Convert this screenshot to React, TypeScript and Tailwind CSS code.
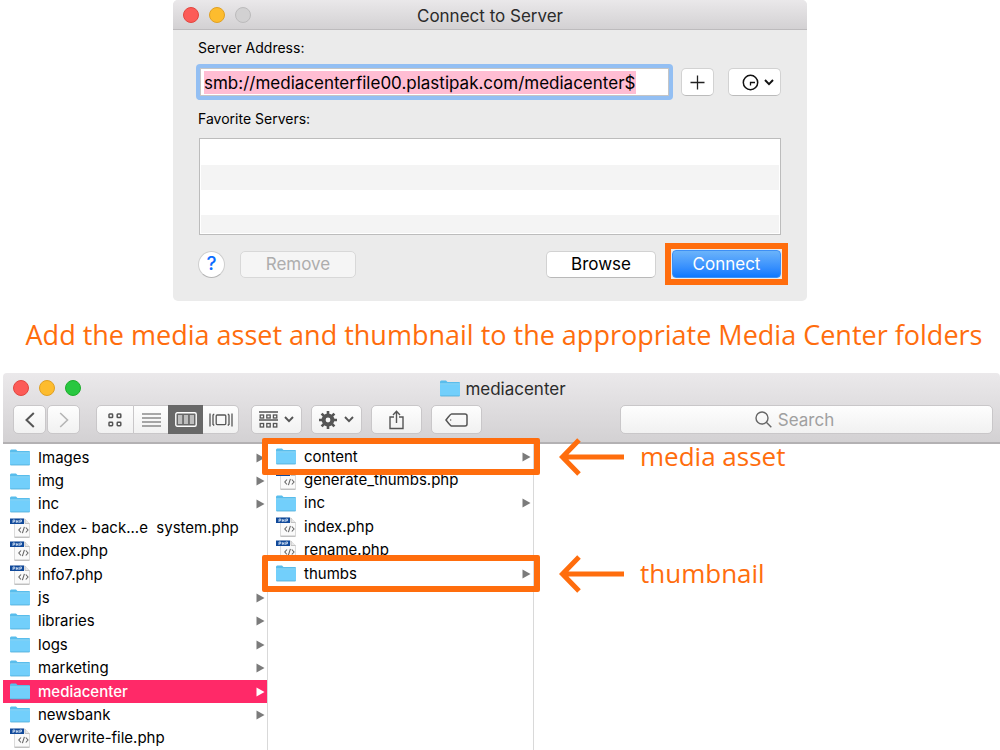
import type { ReactNode } from "react";

type Entry = { name: string; kind: "folder" | "php"; selected?: boolean; marked?: boolean };

const parentItems: Entry[] = [
  { name: "Images", kind: "folder" },
  { name: "img", kind: "folder" },
  { name: "inc", kind: "folder" },
  { name: "index - back...e  system.php", kind: "php" },
  { name: "index.php", kind: "php" },
  { name: "info7.php", kind: "php" },
  { name: "js", kind: "folder" },
  { name: "libraries", kind: "folder" },
  { name: "logs", kind: "folder" },
  { name: "marketing", kind: "folder" },
  { name: "mediacenter", kind: "folder", selected: true },
  { name: "newsbank", kind: "folder" },
  { name: "overwrite-file.php", kind: "php" },
];

const childItems: Entry[] = [
  { name: "content", kind: "folder", marked: true },
  { name: "generate_thumbs.php", kind: "php" },
  { name: "inc", kind: "folder" },
  { name: "index.php", kind: "php" },
  { name: "rename.php", kind: "php" },
  { name: "thumbs", kind: "folder", marked: true },
];

const columnGrid = "grid h-[304px] grid-rows-[repeat(13,minmax(0,1fr))]";

function FolderIcon() {
  return (
    <svg width="20" height="17" viewBox="0 0 20 17" className="shrink-0" aria-hidden="true">
      <path d="M0 2 Q0 .5 1.2 .5 H6 L7.5 2 H19 Q20 2 20 3 V15 Q20 16 19 16 H1 Q0 16 0 15Z" fill="#59bdec" />
      <path d="M0 4.2 H20 V15 Q20 16 19 16 H1 Q0 16 0 15Z" fill="#72cffb" />
      <path d="M0 3.9 H20" stroke="#9fdffb" strokeWidth=".8" />
      <path d="M.5 16 H19.5" stroke="#4ba9d6" strokeWidth=".8" />
    </svg>
  );
}

function PhpIcon() {
  return (
    <svg width="20" height="20" viewBox="0 0 20 20" className="shrink-0" aria-hidden="true">
      <path d="M4.5 1 H15 L19.5 5.5 V19 H4.5Z" fill="#fafafa" stroke="#d2d2d2" strokeWidth=".8" />
      <path d="M15 1 V5.5 H19.5" fill="#e9e9e9" stroke="#b5b5b5" strokeWidth=".8" />
      <path d="M4.5 19.3 H19.5" stroke="#b4b4b4" />
      <path d="M0 .5 H14 V6 H0Z" fill="#10499a" />
      <path d="M3 5 V2 H4.7 V3.7 H3 M6.3 2 V5 M8 2 V5 M6.3 3.5 H8 M9.8 5 V2 H11.5 V3.7 H9.8" fill="none" stroke="#dce8f7" strokeWidth=".8" />
      <path d="M11 9.5 L8.8 12 L11 14.5 M15.8 9.5 L18 12 L15.8 14.5 M14.4 8.8 L12.4 15.2" fill="none" stroke="#666" strokeWidth="1.1" />
    </svg>
  );
}

function Row({ item }: { item: Entry }) {
  const tone = item.selected ? "bg-[#ff2968] text-white font-medium" : "text-black";
  return (
    <li className="relative">
      <a href="#" className={`flex h-full items-center pr-[2px] pl-[7px] ${tone}`}>
        {item.kind === "folder" ? <FolderIcon /> : <PhpIcon />}
        <span className="ml-2 flex-1 whitespace-pre text-[15px] leading-5">{item.name}</span>
        {item.kind === "folder" && (
          <svg width="9" height="10" viewBox="0 0 9 10" className={item.selected ? "text-white" : "text-[#7b7b7b]"} aria-hidden="true">
            <path d="M.5 .5 L8.5 5 L.5 9.5Z" fill="currentColor" />
          </svg>
        )}
      </a>
      {item.marked && <span className="absolute -inset-x-[7px] -inset-y-[7px] z-10 rounded-[2px] border-6 border-[#ff6d0d]" />}
    </li>
  );
}

function Note({ text, row }: { text: string; row: string }) {
  return (
    <div className={`flex items-center gap-4 ${row}`}>
      <svg width="65" height="38" viewBox="0 0 65 38" fill="none" stroke="#ff6d0d" strokeWidth="5" aria-hidden="true">
        <path d="M3 19 H65 M20 2 L3.5 19 L20 36" />
      </svg>
      <span className="pb-[2px] font-['Open_Sans',sans-serif] text-[26px] leading-8 text-[#ff6d0d]">{text}</span>
    </div>
  );
}

const lights = { red: "bg-[#fc5b57] border-[#e2463f]", amber: "bg-[#fdbc2e] border-[#e0a023]", green: "bg-[#28c740] border-[#1dad2b]", off: "bg-[#d2d1d2] border-[#bcbbbc]" };

function Light({ tone, label }: { tone: keyof typeof lights; label: string }) {
  return <button aria-label={label} className={`size-4 rounded-full border ${lights[tone]}`} />;
}

function ToolButton({ label, className, children }: { label: string; className: string; children: ReactNode }) {
  return (
    <button
      aria-label={label}
      className={`flex h-[29px] items-center justify-center border-[#c9c7c9] bg-linear-to-b from-[#fefefe] to-[#f1f1f1] text-[#555] ${className}`}
    >
      {children}
    </button>
  );
}

function Chevron() {
  return (
    <svg width="10" height="7" viewBox="0 0 10 7" fill="none" stroke="currentColor" strokeWidth="1.9" aria-hidden="true">
      <path d="M1 1 L5 5.2 L9 1" />
    </svg>
  );
}

function ConnectDialog() {
  return (
    <section className="mx-auto w-[634px] max-w-full overflow-hidden rounded-[5px] bg-[#ebebeb] text-black">
      <header className="grid h-[30px] grid-cols-[1fr_auto_1fr] items-center border-b border-[#bdbbbd] bg-linear-to-b from-[#eae8ea] to-[#d3d1d3] px-[10px] pt-px">
        <div className="flex gap-[10px]">
          <Light tone="red" label="Close" />
          <Light tone="amber" label="Minimise" />
          <Light tone="off" label="Zoom" />
        </div>
        <h1 className="text-[17px] leading-[22px] pt-[2px] text-[#2b2b2b]">Connect to Server</h1>
      </header>
      <div className="pt-2 pr-[26px] pb-4 pl-[25px]">
        <label htmlFor="address" className="block text-[14px] leading-5">Server Address:</label>
        <div className="mt-[6px] -ml-[2px] flex items-center">
          <div className="flex h-9 flex-1 rounded-[4px] bg-[#93bff3] p-1">
            <div className="flex flex-1 items-center border border-[#c5c5c5] bg-white px-[3px] pt-px">
              <input
                id="address"
                defaultValue="smb://mediacenterfile00.plastipak.com/mediacenter$"
                className="field-sizing-content h-[23px] bg-[#ffbdd3] pt-[2px] pr-px text-[17px] outline-none"
              />
            </div>
          </div>
          <button aria-label="Add" className="ml-2 flex h-7 w-[33px] items-center justify-center rounded-[5px] border border-[#d2d2d2] border-b-[#bbb] bg-white">
            <svg width="15" height="15" viewBox="0 0 15 15" stroke="#222" strokeWidth="1.3" aria-hidden="true">
              <path d="M7.5 .5 V14.5 M.5 7.5 H14.5" />
            </svg>
          </button>
          <button aria-label="Recent servers" className="ml-[14px] flex h-7 w-[53px] items-center justify-end gap-[5px] rounded-[5px] border border-[#d2d2d2] border-b-[#bbb] bg-white pr-[6px] text-[#111]">
            <svg width="17" height="17" viewBox="0 0 17 17" fill="none" stroke="currentColor" aria-hidden="true">
              <circle cx="8.5" cy="8.5" r="7.2" strokeWidth="1.5" />
              <path d="M13 8.5 H8.5 V11.5" strokeWidth="1.3" />
            </svg>
            <Chevron />
          </button>
        </div>
        <h2 className="mt-[9px] text-[14px] leading-5">Favorite Servers:</h2>
        <ul className="mt-[9px] ml-px grid h-[97px] grid-rows-[25px_25px_25px_1fr] border border-[#bcbcbc] bg-white p-px">
          <li />
          <li className="bg-[#f4f4f4]" />
          <li />
          <li className="bg-[#f4f4f4]" />
        </ul>
        <div className="mt-2 flex items-center text-[17px]">
          <button aria-label="Help" className="size-[27px] rounded-full border border-[#cfcfcf] border-b-[#b5b5b5] bg-white text-[19px] leading-6 font-medium text-[#0a6cff]">?</button>
          <button disabled className="ml-[15px] h-[27px] w-[116px] rounded-[5px] border border-[#d8d8d8] bg-[#f5f5f5] leading-6 text-[#adadad]">Remove</button>
          <button className="ml-auto h-[27px] w-[110px] rounded-[5px] border border-[#d2d2d2] border-b-[#b9b9b9] bg-white leading-6">Browse</button>
          <div className="-mr-[7px] ml-[9px] border-6 border-[#ff6d0d] p-px">
            <button className="block h-7 w-[109px] rounded-[4px] border border-[#3d8ff5] bg-linear-to-b from-[#6ab3fa] to-[#0a78ff] leading-6 text-white">Connect</button>
          </div>
        </div>
      </div>
    </section>
  );
}

function FinderWindow() {
  return (
    <section className="ml-[3px]">
      <header className="rounded-t-[4px] border-b-2 border-[#b3b1b3] bg-linear-to-b from-[#ebe9eb] to-[#d3d1d3] pt-[3px] pr-[7px] pb-2 pl-[10px]">
        <div className="grid h-[22px] grid-cols-[1fr_auto_1fr] items-center">
          <div className="flex gap-[10px]">
            <Light tone="red" label="Close" />
            <Light tone="amber" label="Minimise" />
            <Light tone="green" label="Zoom" />
          </div>
          <h1 className="flex items-center gap-[5px] text-[17px] leading-[22px] text-[#2b2b2b]"><FolderIcon /><span className="pt-[2px]">mediacenter</span></h1>
        </div>
        <div className="mt-[7px] flex">
          <ToolButton label="Back" className="w-[33px] rounded-[5px] border">
            <svg width="10" height="16" viewBox="0 0 10 16" fill="none" stroke="#555" strokeWidth="2" aria-hidden="true"><path d="M8.8 1 L1.5 8 L8.8 15" /></svg>
          </ToolButton>
          <ToolButton label="Forward" className="ml-px w-[33px] rounded-[5px] border">
            <svg width="10" height="16" viewBox="0 0 10 16" fill="none" stroke="#b5b5b5" strokeWidth="1.6" aria-hidden="true"><path d="M1.2 1 L8.5 8 L1.2 15" /></svg>
          </ToolButton>
          <div className="ml-4 flex">
            <ToolButton label="Icon view" className="w-[38px] rounded-l-[5px] border">
              <svg width="14" height="14" viewBox="0 0 14 14" fill="none" stroke="currentColor" strokeWidth="1.5" aria-hidden="true">
                <rect x="1" y="1" width="3.6" height="3.6" rx=".7" /><rect x="9.2" y="1" width="3.6" height="3.6" rx=".7" />
                <rect x="1" y="9.2" width="3.6" height="3.6" rx=".7" /><rect x="9.2" y="9.2" width="3.6" height="3.6" rx=".7" />
              </svg>
            </ToolButton>
            <ToolButton label="List view" className="w-[34px] border-y">
              <svg width="19" height="14" viewBox="0 0 19 14" stroke="currentColor" strokeWidth="1.2" aria-hidden="true"><path d="M0 1 H19 M0 5 H19 M0 9 H19 M0 13 H19" /></svg>
            </ToolButton>
            <button aria-label="Column view" aria-pressed="true" className="flex h-[29px] w-[35px] items-center justify-center bg-[#686868]">
              <svg width="22" height="15" viewBox="0 0 22 15" fill="none" stroke="#fff" strokeWidth="1.4" aria-hidden="true">
                <rect x=".8" y=".8" width="20.4" height="13.4" rx="1.5" />
                <path d="M3 3 H7.2 V12 H3Z M8.9 3 H13.1 V12 H8.9Z M14.8 3 H19 V12 H14.8Z" fill="#bdbdbd" stroke="none" />
              </svg>
            </button>
            <ToolButton label="Cover flow view" className="w-[36px] rounded-r-[5px] border border-l-0">
              <svg width="24" height="14" viewBox="0 0 24 14" fill="none" stroke="currentColor" strokeWidth="1.3" aria-hidden="true">
                <rect x="7.2" y="2" width="9.6" height="9.6" rx="1" /><path d="M1 .5 V13.5 M23 .5 V13.5 M4 1.5 V12 M20 1.5 V12 M4 12 H5.3 M20 12 H18.7 M4 1.5 H5.3 M20 1.5 H18.7" />
              </svg>
            </ToolButton>
          </div>
          <ToolButton label="Arrange" className="ml-3 w-[51px] gap-[6px] rounded-[5px] border">
            <svg width="19" height="18" viewBox="0 0 19 18" fill="none" stroke="currentColor" strokeWidth="1.3" aria-hidden="true">
              <path d="M0 1 H19 M0 9 H19" /><rect x="1.2" y="4" width="3.4" height="3" /><rect x="7.8" y="4" width="3.4" height="3" /><rect x="14.4" y="4" width="3.4" height="3" />
              <rect x="1.2" y="12.5" width="3.4" height="3.5" /><rect x="7.8" y="12.5" width="3.4" height="3.5" /><rect x="14.4" y="12.5" width="3.4" height="3.5" />
            </svg>
            <Chevron />
          </ToolButton>
          <ToolButton label="Actions" className="ml-[9px] w-[51px] gap-[7px] rounded-[5px] border">
            <svg width="18" height="18" viewBox="-9 -9 18 18" fill="none" stroke="currentColor" aria-hidden="true">
              <circle r="4.4" strokeWidth="4" />
              <path d="M0 -9 V-5 M0 5 V9 M-9 0 H-5 M5 0 H9 M-6.4 -6.4 L-4 -4 M4 4 L6.4 6.4 M6.4 -6.4 L4 -4 M-4 4 L-6.4 6.4" strokeWidth="2.6" />
            </svg>
            <Chevron />
          </ToolButton>
          <ToolButton label="Share" className="ml-[9px] w-[51px] rounded-[5px] border">
            <svg width="15" height="20" viewBox="0 0 15 20" fill="none" stroke="currentColor" strokeWidth="1.4" aria-hidden="true">
              <path d="M5 7 H1 V18.5 H14 V7 H10 M7.5 13 V1.5 M4 5 L7.5 1.3 L11 5" />
            </svg>
          </ToolButton>
          <ToolButton label="Tags" className="ml-[9px] w-[51px] rounded-[5px] border">
            <svg width="23" height="14" viewBox="0 0 23 14" fill="none" stroke="currentColor" strokeWidth="1.5" aria-hidden="true">
              <path d="M6.5 1 H20 Q22 1 22 3 V11 Q22 13 20 13 H6.5 Q5.5 13 1 7 Q5.5 1 6.5 1Z" /><circle cx="5.7" cy="7" r=".7" fill="currentColor" stroke="none" />
            </svg>
          </ToolButton>
          <label className="ml-auto flex h-[29px] w-[373px] items-center justify-center gap-[6px] rounded-[5px] border border-[#c9c7c9] bg-linear-to-b from-[#fefefe] to-[#f1f1f1] pr-6">
            <svg width="17" height="17" viewBox="0 0 17 17" fill="none" stroke="#666" strokeWidth="1.4" aria-hidden="true"><circle cx="7" cy="7" r="6" /><path d="M11.3 11.3 L16.3 16.3" /></svg>
            <input type="search" aria-label="Search" placeholder="Search" className="field-sizing-content text-[17px] leading-5 outline-none placeholder:text-[#a0a0a0]" />
          </label>
        </div>
      </header>
      <div className="flex">
        <div className="w-[265px] border-r border-[#d9d9d9] pt-[2px]">
          <ul className={columnGrid}>{parentItems.map((item) => <Row key={item.name} item={item} />)}</ul>
        </div>
        <div className="w-[266px] border-r border-[#d9d9d9] pt-px pl-px">
          <ul className={columnGrid}>{childItems.map((item) => <Row key={item.name} item={item} />)}</ul>
        </div>
        <div className="pt-px pl-[25px]">
          <div className={columnGrid}>
            <Note text="media asset" row="row-start-1" />
            <Note text="thumbnail" row="row-start-6" />
          </div>
        </div>
      </div>
    </section>
  );
}

export default function App() {
  return (
    <main className="overflow-hidden bg-white font-['Inter',sans-serif]">
      <div className="pr-5">
        <ConnectDialog />
      </div>
      <p className="mt-[17px] mb-[21px] pl-2 text-center font-['Open_Sans',sans-serif] text-[27px] leading-[34px] text-[#ff6d0d]">
        Add the media asset and thumbnail to the appropriate Media Center folders
      </p>
      <FinderWindow />
    </main>
  );
}
